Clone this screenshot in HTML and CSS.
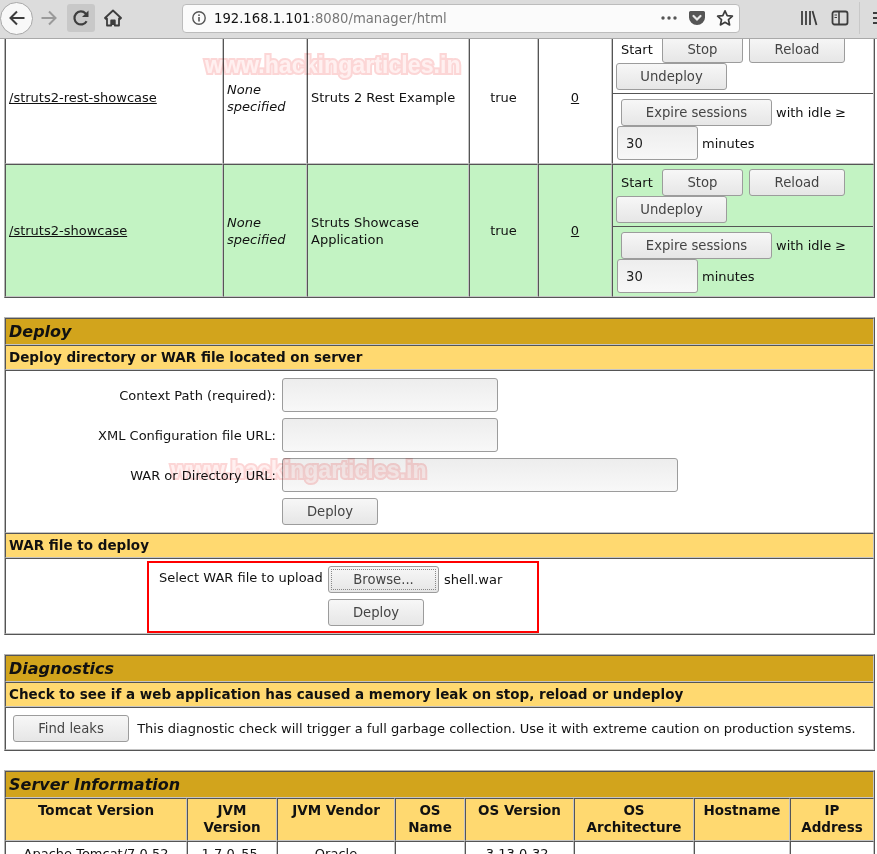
FILE: index.html
```html
<!DOCTYPE html>
<html lang="en">
<head>
    <meta charset="UTF-8">
    <meta name="viewport" content="width=device-width, initial-scale=1.0">
    <title>/manager</title>
    <link rel="stylesheet" href="styles.css">
</head>
<body>
    <div class="toolbar">
        <div class="back">
            <svg width="18" height="18" viewBox="0 0 18 18"><path d="M16.5 9H2.5M9 2.5L2.5 9L9 15.5" fill="none" stroke="#3d3d3d" stroke-width="2"/></svg>
        </div>
        <svg class="forward" width="18" height="18" viewBox="0 0 18 18"><path d="M1.5 9H15.5M9 2.5L15.5 9L9 15.5" fill="none" stroke="#9a9a9a" stroke-width="2"/></svg>
        <div class="reload">
            <svg width="18" height="18" viewBox="0 0 18 18"><path d="M14.6 12.2A6.5 6.5 0 1 1 13.6 4.4L15 6" fill="none" stroke="#3d3d3d" stroke-width="2.2"/><path d="M16.5 1.5V8H10Z" fill="#3d3d3d"/></svg>
        </div>
        <svg class="home" width="18" height="18" viewBox="0 0 18 18"><path d="M9 1.5L1 9L2.2 10.2L3 9.5V16.5H7.2V11.5H10.8V16.5H15V9.5L15.8 10.2L17 9L9 1.5Z" fill="none" stroke="#3d3d3d" stroke-width="1.8" stroke-linejoin="round"/><rect x="7.5" y="11" width="3" height="5" fill="#3d3d3d"/></svg>
        <div class="urlbar">
            <svg class="info" width="16" height="16" viewBox="0 0 16 16"><circle cx="8" cy="8" r="6.2" fill="none" stroke="#555" stroke-width="1.4"/><rect x="7.2" y="7" width="1.6" height="4.5" fill="#555"/><rect x="7.2" y="4.4" width="1.6" height="1.6" fill="#555"/></svg>
            <span class="host">192.168.1.101</span><span class="urlpath">:8080/manager/html</span>
            <svg class="dots" width="18" height="4" viewBox="0 0 18 4"><circle cx="3" cy="2" r="1.7" fill="#555"/><circle cx="9" cy="2" r="1.7" fill="#555"/><circle cx="15" cy="2" r="1.7" fill="#555"/></svg>
            <svg class="pocket" width="18" height="18" viewBox="0 0 18 18"><path d="M2.5 2H15.5A1.5 1.5 0 0 1 17 3.5V8.5A8 7.5 0 0 1 1 8.5V3.5A1.5 1.5 0 0 1 2.5 2Z" fill="#555"/><path d="M5.5 7L9 10.5L12.5 7" fill="none" stroke="#e8e8e8" stroke-width="2.2" stroke-linecap="round"/></svg>
            <svg class="star" width="18" height="18" viewBox="0 0 18 18"><path d="M9 1.8L11.2 6.6L16.4 7.2L12.5 10.7L13.6 15.9L9 13.3L4.4 15.9L5.5 10.7L1.6 7.2L6.8 6.6Z" fill="none" stroke="#3d3d3d" stroke-width="1.7" stroke-linejoin="round"/></svg>
        </div>
        <svg class="library" width="18" height="18" viewBox="0 0 18 18"><path d="M2 2V16M6 2V16M10 2V16M12.5 2L16.5 16" fill="none" stroke="#3d3d3d" stroke-width="1.8"/></svg>
        <svg class="sidebar" width="18" height="18" viewBox="0 0 18 18"><rect x="1.5" y="2.5" width="15" height="13" rx="2" fill="none" stroke="#3d3d3d" stroke-width="1.8"/><path d="M8 3V15" stroke="#3d3d3d" stroke-width="1.6"/><path d="M3.5 6H6M3.5 8.5H6" stroke="#3d3d3d" stroke-width="1.2"/></svg>
        <div class="separator"></div>
        <div class="menu"></div>
    </div>

    <div class="page">
        <div class="content">
            <table class="grid apps">
                <colgroup>
                    <col class="c-path"><col class="c-version"><col class="c-name"><col class="c-running"><col class="c-sessions"><col class="c-commands">
                </colgroup>
                <tr>
                    <td><a href="#">/struts2-rest-showcase</a></td>
                    <td><em>None specified</em></td>
                    <td>Struts 2 Rest Example</td>
                    <td class="center">true</td>
                    <td class="center"><a href="#">0</a></td>
                    <td class="commands">
                        <div class="cmd-row">
                            <span class="start">Start</span>
                            <button class="btn stop">Stop</button>
                            <button class="btn reload-btn">Reload</button>
                            <button class="btn undeploy">Undeploy</button>
                        </div>
                        <div class="expire-row">
                            <button class="btn expire">Expire sessions</button>
                            <span class="idle">with idle ≥</span>
                            <input class="field idle-input" value="30">
                            <span class="idle">minutes</span>
                        </div>
                    </td>
                </tr>
                <tr class="odd">
                    <td><a href="#">/struts2-showcase</a></td>
                    <td><em>None specified</em></td>
                    <td>Struts Showcase Application</td>
                    <td class="center">true</td>
                    <td class="center"><a href="#">0</a></td>
                    <td class="commands">
                        <div class="cmd-row">
                            <span class="start">Start</span>
                            <button class="btn stop">Stop</button>
                            <button class="btn reload-btn">Reload</button>
                            <button class="btn undeploy">Undeploy</button>
                        </div>
                        <div class="expire-row">
                            <button class="btn expire">Expire sessions</button>
                            <span class="idle">with idle ≥</span>
                            <input class="field idle-input" value="30">
                            <span class="idle">minutes</span>
                        </div>
                    </td>
                </tr>
            </table>

            <table class="grid section deploy">
                <tr><td class="title">Deploy</td></tr>
                <tr><td class="heading">Deploy directory or WAR file located on server</td></tr>
                <tr>
                    <td class="form-cell">
                        <div class="deploy-form">
                            <label>Context Path (required):</label>
                            <input class="field short">
                            <label>XML Configuration file URL:</label>
                            <input class="field short">
                            <label>WAR or Directory URL:</label>
                            <input class="field long">
                            <span></span>
                            <button class="btn deploy-btn">Deploy</button>
                        </div>
                    </td>
                </tr>
                <tr><td class="heading">WAR file to deploy</td></tr>
                <tr>
                    <td class="upload-cell">
                        <div class="upload-box">
                            <div class="upload-form">
                                <span class="upload-label">Select WAR file to upload</span>
                                <div class="file-row">
                                    <button class="btn browse"><span class="focus-ring">Browse...</span></button>
                                    <span>shell.war</span>
                                </div>
                                <span></span>
                                <button class="btn deploy-btn">Deploy</button>
                            </div>
                        </div>
                    </td>
                </tr>
            </table>

            <table class="grid section diagnostics">
                <tr><td class="title">Diagnostics</td></tr>
                <tr><td class="heading">Check to see if a web application has caused a memory leak on stop, reload or undeploy</td></tr>
                <tr>
                    <td class="diag-cell">
                        <button class="btn leaks">Find leaks</button>
                        <span>This diagnostic check will trigger a full garbage collection. Use it with extreme caution on production systems.</span>
                    </td>
                </tr>
            </table>

            <table class="grid section server">
                <colgroup>
                    <col class="s1"><col class="s2"><col class="s3"><col class="s4"><col class="s5"><col class="s6"><col class="s7"><col class="s8">
                </colgroup>
                <tr><td class="title" colspan="8">Server Information</td></tr>
                <tr class="head-row">
                    <th>Tomcat Version</th>
                    <th>JVM Version</th>
                    <th>JVM Vendor</th>
                    <th>OS Name</th>
                    <th>OS Version</th>
                    <th>OS Architecture</th>
                    <th>Hostname</th>
                    <th>IP Address</th>
                </tr>
                <tr>
                    <td class="center top">Apache Tomcat/7.0.52</td>
                    <td class="center">1.7.0_55-b13</td>
                    <td class="center">Oracle Corporation</td>
                    <td class="center">Linux</td>
                    <td class="center">3.13.0-32-generic</td>
                    <td class="center">i386</td>
                    <td class="center">ubuntu</td>
                    <td class="center">127.0.1.1</td>
                </tr>
            </table>

            <div class="watermark mark-top">www.hackingarticles.in</div>
            <div class="watermark mark-mid">www.hackingarticles.in</div>
        </div>
    </div>
</body>
</html>
```

FILE: styles.css
```css
* {
    box-sizing: border-box;
}

html, body {
    height: 100%;
}

body {
    margin: 0;
    overflow: hidden;
    font-family: "DejaVu Sans", sans-serif;
    font-size: 13px;
    line-height: 17px;
    color: #111;
    background-color: #fff;
}

/* browser chrome */
.toolbar {
    display: flex;
    align-items: center;
    height: 39px;
    padding-bottom: 2px;
    background-color: #dcdcdc;
    border-bottom: 1px solid #a9a9a9;
    overflow: hidden;
}

.back {
    display: flex;
    align-items: center;
    justify-content: center;
    flex: none;
    width: 33px;
    height: 33px;
    margin-left: 0;
    background-color: #f8f8f8;
    border: 1px solid #a8a8a8;
    border-radius: 50%;
}

.forward {
    flex: none;
    margin-left: 7px;
}

.reload {
    display: flex;
    align-items: center;
    justify-content: center;
    flex: none;
    width: 28px;
    height: 28px;
    margin-left: 9px;
    background-color: #c8c8c8;
    border-radius: 3px;
}

.home {
    flex: none;
    margin-left: 9px;
}

.urlbar {
    display: flex;
    align-items: center;
    flex: none;
    width: 558px;
    height: 29px;
    margin-left: 60px;
    padding-left: 8px;
    background-color: #fbfbfb;
    border: 1px solid #bcbcbc;
    border-radius: 4px;
    font-size: 13.2px;
}

.info {
    flex: none;
}

.host {
    margin-left: 7px;
    color: #111;
}

.urlpath {
    color: #777;
}

.dots {
    margin-left: auto;
}

.pocket {
    margin-left: 10px;
}

.star {
    margin-left: 10px;
    margin-right: 5px;
}

.library {
    flex: none;
    margin-left: 60px;
}

.sidebar {
    flex: none;
    margin-left: 13px;
}

.separator {
    flex: none;
    width: 1px;
    height: 32px;
    margin-left: 10px;
    background-color: #c8c8c8;
}

.menu {
    flex: none;
    width: 12px;
    height: 12px;
    margin-left: 13px;
    border-top: 2px solid #3d3d3d;
    border-bottom: 2px solid #3d3d3d;
    background: linear-gradient(#3d3d3d, #3d3d3d) center / 100% 2px no-repeat;
}

/* manager page */
.page {
    height: 815px;
    overflow: hidden;
}

.content {
    position: relative;
    margin-top: -9px;
    padding-left: 4px;
}

.grid {
    width: 871px;
    table-layout: fixed;
    border-collapse: separate;
    border-spacing: 0;
    border: 1px solid;
    border-color: #b4b4b4 #555 #555 #b4b4b4;
}

.grid td,
.grid th {
    padding: 3px;
    border: 1px solid;
    border-color: #555 #c4c4c4 #c4c4c4 #555;
}

.section {
    margin-top: 19px;
}

.c-path { width: 218px; }
.c-version { width: 84px; }
.c-name { width: 162px; }
.c-running { width: 69px; }
.c-sessions { width: 74px; }
.c-commands { width: 262px; }

a {
    color: #111;
}

.center {
    text-align: center;
}

.grid td.top {
    vertical-align: top;
}

.apps tr {
    height: 133px;
}

.apps .odd td {
    background-color: #c3f3c3;
}

.apps td.commands {
    padding: 0;
}

.cmd-row {
    display: flex;
    flex-wrap: wrap;
    align-items: center;
    align-content: flex-start;
    height: 59px;
    padding: 1px 3px 0;
    column-gap: 6px;
    border-bottom: 1px solid #555;
}

.start {
    width: 35px;
    margin-left: 5px;
}

.btn {
    height: 27px;
    padding: 0;
    font-family: inherit;
    font-size: 13.2px;
    color: #444;
    background: linear-gradient(#f7f7f7, #e6e6e6);
    border: 1px solid #9c9c9c;
    border-radius: 3px;
}

.stop { width: 81px; }
.reload-btn { width: 96px; }
.undeploy { width: 111px; }

.expire-row {
    display: flex;
    flex-wrap: wrap;
    align-items: center;
    padding: 5px 3px 0;
}

.expire {
    width: 151px;
    margin-left: 5px;
    margin-right: 4px;
}

.idle {
    white-space: nowrap;
}

.field {
    height: 34px;
    font-family: inherit;
    font-size: 13.2px;
    color: #222;
    background: linear-gradient(#ededed, #f8f8f8);
    border: 1px solid #9c9c9c;
    border-radius: 3px;
}

.idle-input {
    width: 81px;
    margin-left: 1px;
    margin-right: 4px;
    padding: 0 8px;
}

.title {
    height: 27px;
    font-size: 16px;
    font-weight: bold;
    font-style: italic;
    background-color: #d2a41c;
}

.heading {
    height: 25px;
    font-size: 13.5px;
    font-weight: bold;
    background-color: #ffd970;
}

.form-cell {
    height: 163px;
}

.deploy-form {
    display: grid;
    grid-template-columns: 267px 1fr;
    column-gap: 6px;
    row-gap: 6px;
    align-items: center;
    justify-items: start;
}

.deploy-form label {
    justify-self: end;
    padding-top: 1px;
}

.short { width: 216px; }
.long { width: 396px; }
.deploy-btn { width: 96px; }

.grid td.upload-cell {
    padding: 2px 0 0;
    vertical-align: top;
}

.upload-box {
    width: 392px;
    height: 72px;
    margin-left: 141px;
    padding: 3px 0 0 10px;
    border: 2px solid #f00;
}

.upload-form {
    display: grid;
    grid-template-columns: 169px 1fr;
    row-gap: 6px;
    align-items: center;
    justify-items: start;
}

.upload-label {
    align-self: start;
    padding-top: 3px;
}

.file-row {
    display: flex;
    align-items: center;
    column-gap: 5px;
}

.browse {
    width: 111px;
    padding: 2px;
}

.focus-ring {
    display: block;
    height: 21px;
    line-height: 19px;
    border: 1px dotted #888;
}

.grid td.diag-cell {
    height: 43px;
    padding: 3px 7px;
}

.leaks {
    width: 116px;
    margin-right: 4px;
}

.s1 { width: 182px; }
.s2 { width: 90px; }
.s3 { width: 118px; }
.s4 { width: 70px; }
.s5 { width: 109px; }
.s6 { width: 120px; }
.s7 { width: 96px; }
.s8 { width: 84px; }

.head-row th {
    height: 43px;
    vertical-align: top;
    font-size: 13.5px;
    background-color: #ffd970;
}

/* site watermark painted over the shot */
.watermark {
    position: absolute;
    font-family: "Liberation Sans", sans-serif;
    font-size: 23.2px;
    line-height: 28px;
    font-weight: bold;
    white-space: nowrap;
    color: #fff0f0;
    -webkit-text-stroke: 4px #fcd6d6;
    paint-order: stroke fill;
    mix-blend-mode: multiply;
}

.mark-top {
    left: 205px;
    top: 21px;
}

.mark-mid {
    left: 171px;
    top: 426px;
}
```
